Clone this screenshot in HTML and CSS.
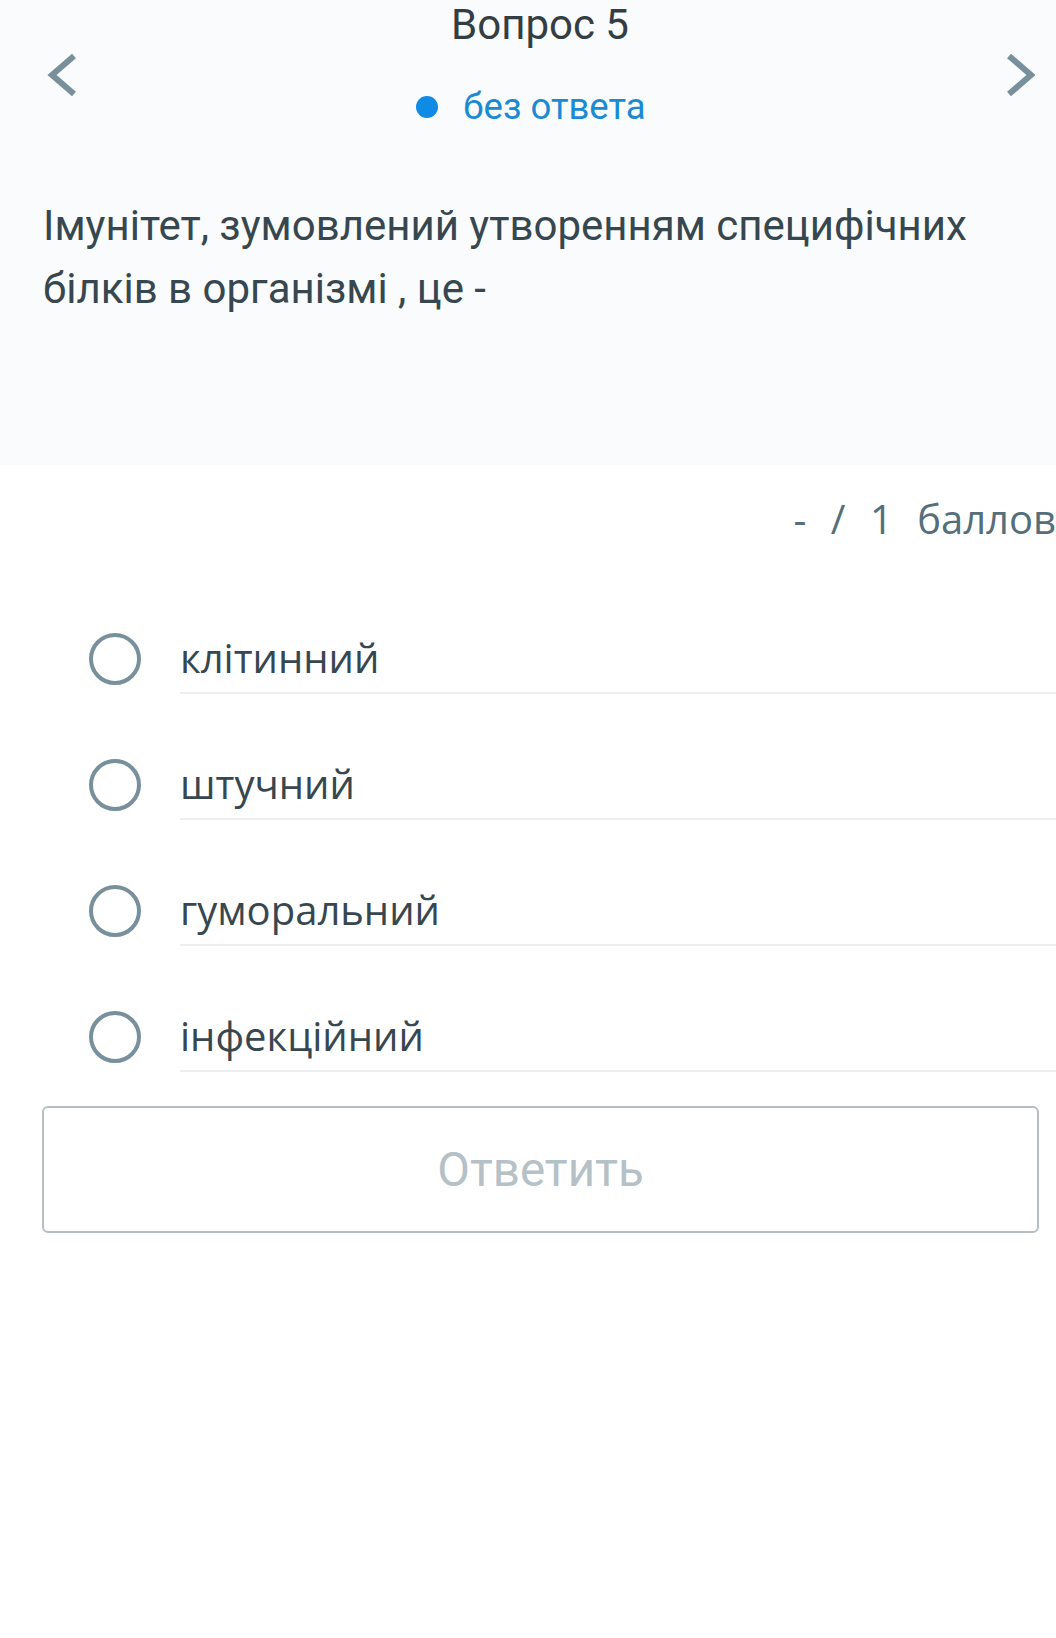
FILE: index.html
```html
<!DOCTYPE html>
<html lang="uk">
<head>
  <meta charset="UTF-8" />
  <meta name="viewport" content="width=device-width, initial-scale=1" />
  <title>Вопрос 5</title>
  <link rel="stylesheet" href="styles.css">
</head>
<body>

<div class="page">
  <section class="question-head">
    <div class="nav">
      <button class="arrow prev" aria-label="Назад">
        <svg width="32" height="44" viewBox="0 0 32 44"><polyline points="29,3 7,22 29,41" /></svg>
      </button>
      <div class="head-center">
        <h1>Вопрос 5</h1>
        <div class="status"><span class="dot"></span>без ответа</div>
      </div>
      <button class="arrow next" aria-label="Вперед">
        <svg width="32" height="44" viewBox="0 0 32 44"><polyline points="6,3 28,22 6,41" /></svg>
      </button>
    </div>
    <p class="question-text">Імунітет, зумовлений утворенням специфічних білків в організмі , це -</p>
  </section>

  <div class="score">- / 1 баллов</div>

  <ul class="options">
    <li><span class="radio"></span><span class="label">клітинний</span></li>
    <li><span class="radio"></span><span class="label">штучний</span></li>
    <li><span class="radio"></span><span class="label">гуморальний</span></li>
    <li><span class="radio"></span><span class="label">інфекційний</span></li>
  </ul>

  <button class="submit">Ответить</button>
</div>

</body>
</html>
```

FILE: styles.css
```css
body {
  margin: 0;
  background: #fff;
  overflow: hidden;
  font-family: Roboto, 'Liberation Sans', sans-serif;
  color: #37474f;
}
.page {
  width: 1080px;
}
.question-head {
  background: #f9fbfc;
  padding: 1px 0 145px;
}
.nav {
  display: flex;
  align-items: flex-start;
  padding: 0 45px;
}
.arrow {
  background: none;
  border: none;
  padding: 0;
  margin-top: 52px;
  cursor: pointer;
}
.arrow svg {
  display: block;
}
.arrow polyline {
  fill: none;
  stroke: #78909c;
  stroke-width: 6;
  stroke-linejoin: miter;
}
.head-center {
  flex: 1;
  text-align: center;
}
.head-center h1 {
  margin: 0;
  font-size: 42px;
  line-height: 48px;
  font-weight: 400;
  color: #333e44;
}
.status {
  display: inline-flex;
  align-items: center;
  gap: 25px;
  margin: 36px 18px 0 0;
  font-size: 36.5px;
  line-height: 44px;
  color: #1a8ad2;
}
.status .dot {
  width: 22px;
  height: 22px;
  border-radius: 50%;
  background: #0f8be6;
}
.question-text {
  margin: 65px 43px 0;
  font-size: 42px;
  line-height: 63px;
  color: #37474f;
}
.score {
  margin-top: 27px;
  padding-right: 24px;
  text-align: right;
  font-family: 'Open Sans', 'Noto Sans', sans-serif;
  font-size: 40px;
  line-height: 54px;
  word-spacing: 14px;
  color: #546e7a;
}
.options {
  list-style: none;
  margin: 85px 0 0;
  padding: 0 0 0 89px;
  display: flex;
  flex-direction: column;
  gap: 63px;
}
.options li {
  display: flex;
  align-items: flex-start;
}
.radio {
  flex: none;
  box-sizing: border-box;
  width: 52px;
  height: 52px;
  margin-top: 2px;
  border: 4px solid #78909c;
  border-radius: 50%;
}
.label {
  flex: 1;
  margin-left: 39px;
  padding-bottom: 7px;
  border-bottom: 2px solid #eceff1;
  font-family: 'Open Sans', 'Noto Sans', sans-serif;
  font-size: 40px;
  line-height: 54px;
  color: #37474f;
}
.submit {
  display: block;
  width: 997px;
  height: 127px;
  margin: 34px 0 0 42px;
  background: #fff;
  border: 2px solid #b6bec2;
  border-radius: 6px;
  font-family: Roboto, 'Liberation Sans', sans-serif;
  font-size: 47.5px;
  color: #b5c1c7;
}
```
